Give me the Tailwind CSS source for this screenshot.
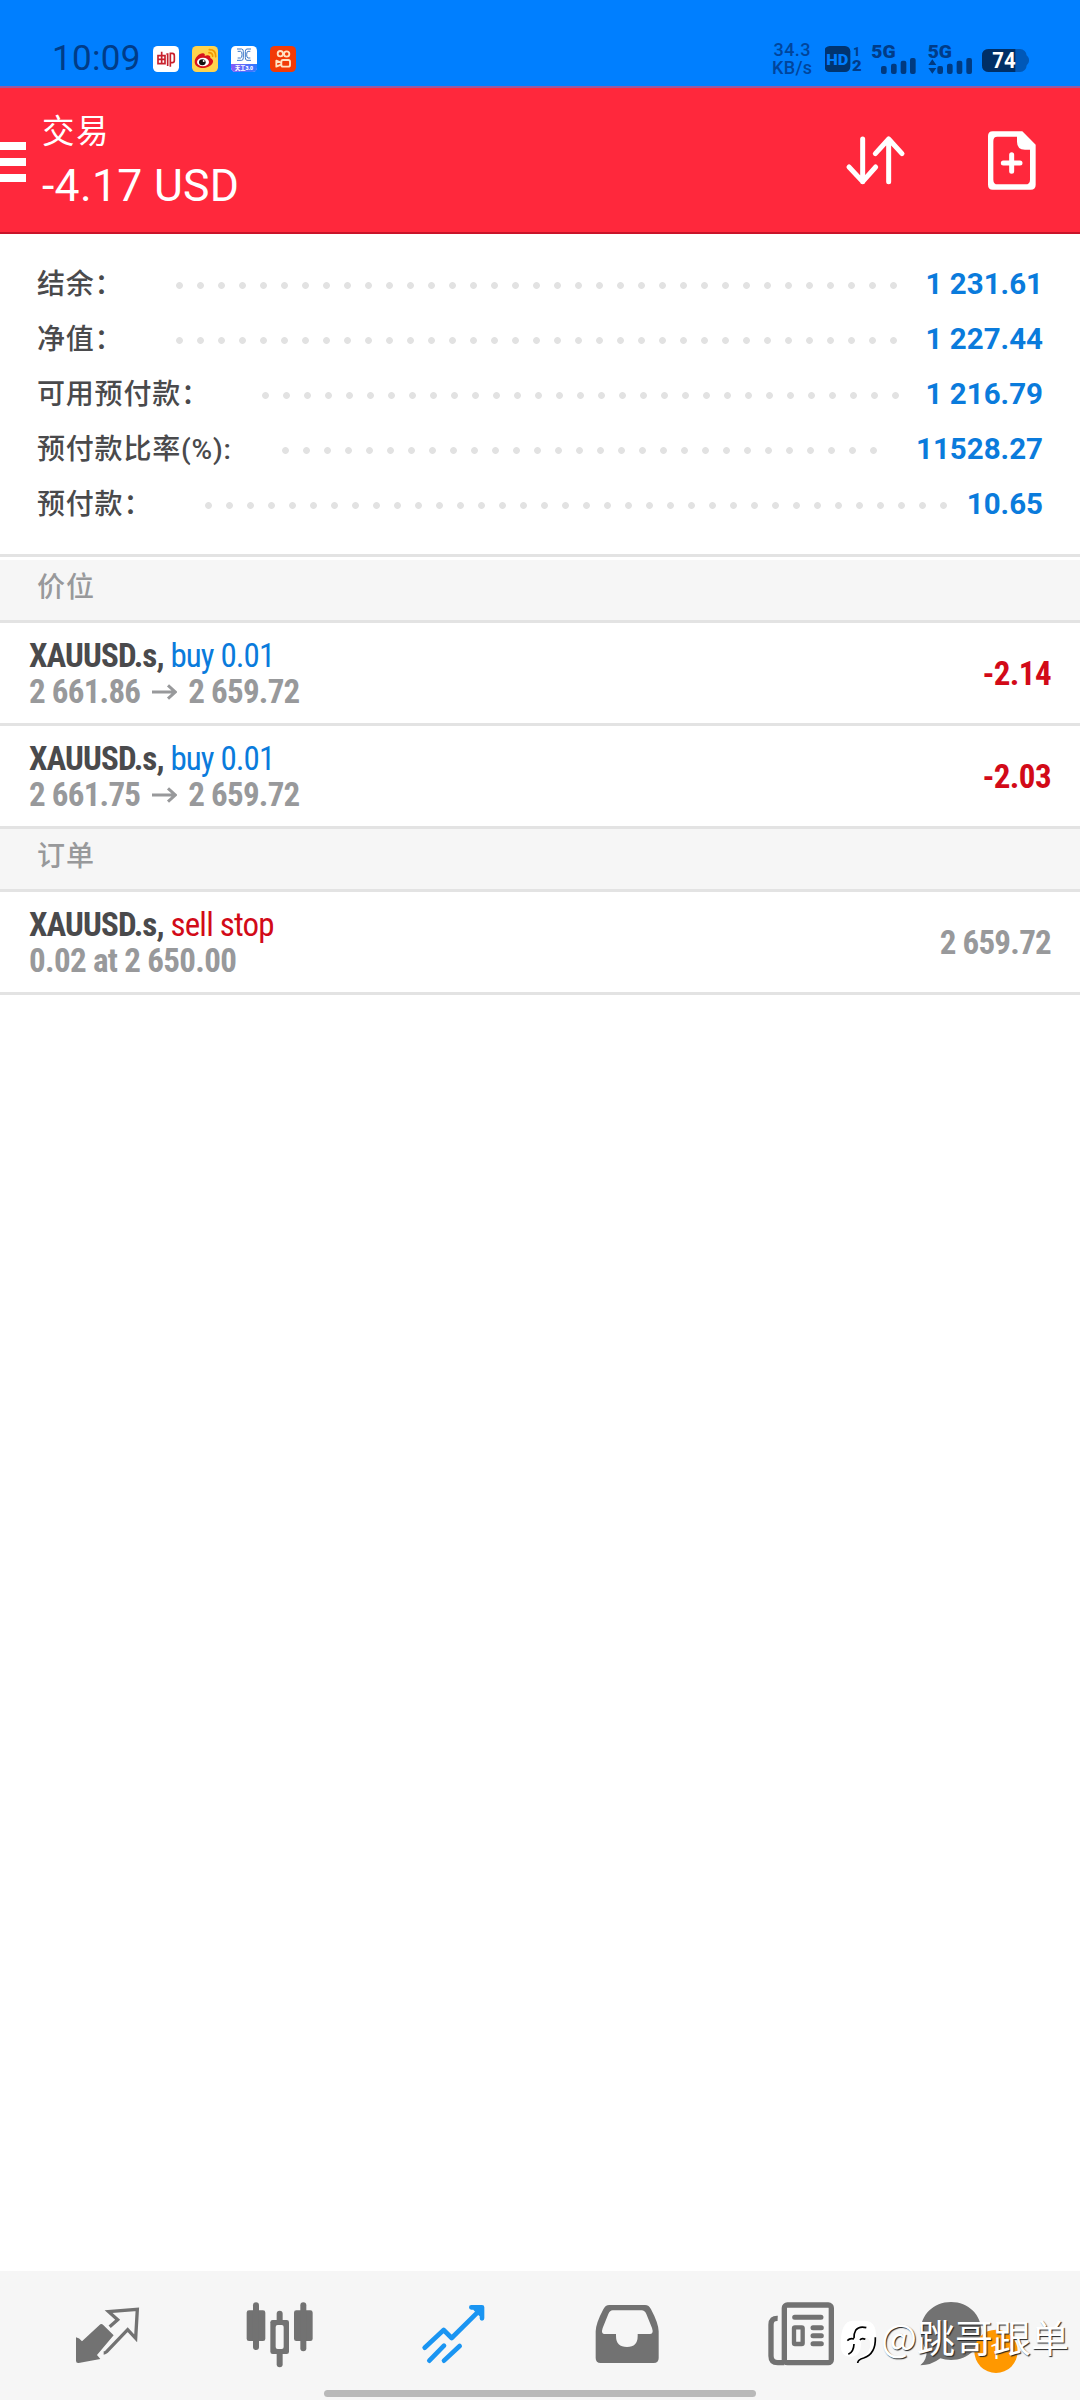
<!DOCTYPE html>
<html lang="zh-CN">
<head>
<meta charset="utf-8">
<title>交易</title>
<script src="https://cdn.jsdelivr.net/npm/@tailwindcss/browser@4"></script>
</head>
<body class="bg-white">
<div class="flex flex-col w-[1080px] h-[2400px] overflow-hidden bg-white font-[Roboto,'Noto_Sans_CJK_SC',sans-serif]">

  <!-- status bar -->
  <div class="flex h-[86px] shrink-0 bg-[#007fff] text-[#003c88]">
    <div class="w-[100px] pl-[52px] pt-[39px] text-[35px] leading-[40px] font-normal tracking-[0.3px] whitespace-nowrap">10:09</div>
    <div class="flex gap-[13px] pl-[53px] pt-[46px]">
      <svg class="w-[26px] h-[26px]" viewBox="0 0 78 78"><rect width="78" height="78" rx="14" fill="#fff"/><g fill="none" stroke="#c8202c" stroke-width="5"><path d="M15 29h21v24H15zM26 17v36M15 40h21M44 60V22M44 24h-4M52 62V22h6q6 0 6 7v14q0 7-6 7h-6"/></g></svg>
      <svg class="w-[26px] h-[26px]" viewBox="0 0 78 78"><rect width="78" height="78" rx="14" fill="#ffd34d"/><path d="M8 48C8 34 24 20 34 22c5 1 5 5 4 8 8-4 19-3 17 6 8 3 10 9 7 15-7 13-26 17-38 14C16 63 8 57 8 48z" fill="#d8131d"/><ellipse cx="33" cy="48" rx="18" ry="13" fill="#fff"/><ellipse cx="31" cy="49" rx="10" ry="9" fill="#111"/><circle cx="35" cy="45" r="3" fill="#fff"/><path d="M52 11q20 0 19 21M51 20q11 0 11 11" fill="none" stroke="#f39800" stroke-width="5" stroke-linecap="round"/></svg>
      <svg class="w-[26px] h-[26px]" viewBox="0 0 78 78"><defs><linearGradient id="tg"><stop stop-color="#8a5cf6"/><stop offset="1" stop-color="#2e7bff"/></linearGradient></defs><rect width="78" height="78" rx="14" fill="#fff"/><path d="M0 54h78v10q0 14-14 14H14Q0 78 0 64z" fill="url(#tg)"/><path d="M18 9h14q5 0 5 8v18q0 8-5 8H18M60 9H48q-5 0-5 8v18q0 8 5 8h12M20 16h9q4 0 4 10t-4 10h-9M58 16h-7q-4 0-4 10t4 10h7" fill="none" stroke="#3d78c8" stroke-width="3"/><text x="12" y="72" font-size="16" font-weight="900" fill="#fff" textLength="54" lengthAdjust="spacingAndGlyphs">天工3.0</text></svg>
      <svg class="w-[26px] h-[26px]" viewBox="0 0 78 78"><rect width="78" height="78" rx="14" fill="#f23a06"/><g fill="none" stroke="#ffe3c4" stroke-width="5.5" stroke-linejoin="round"><circle cx="31" cy="23" r="8"/><circle cx="50" cy="24" r="8"/><rect x="34" y="42" width="26" height="20" rx="5"/><path d="M33 50l-14-6v18l14-6"/></g></svg>
    </div>
    <div class="flex ml-auto pr-[51px] pt-[40px]">
      <div class="w-[51px] pt-[1px] text-center text-[18px] leading-[18px] tracking-[0.4px] font-medium text-[#00459c] -translate-x-[7px]">34.3<br>KB/s</div>
      <svg class="w-[48px] h-[40px]" viewBox="254 60 144 120" fill="currentColor"><rect x="252" y="78" width="78" height="78" rx="16" fill="#003470"/><text x="258" y="134" font-size="46" font-weight="900" fill="#007fff" textLength="66" lengthAdjust="spacingAndGlyphs">HD</text><text x="339" y="107" font-size="40" font-weight="900" textLength="20" lengthAdjust="spacingAndGlyphs">1</text><text x="335" y="153" font-size="43" font-weight="900" textLength="29" lengthAdjust="spacingAndGlyphs">2</text></svg>
      <svg class="w-[56px] h-[40px] overflow-visible" viewBox="399 60 168 120" fill="currentColor"><text x="394" y="115" font-size="57" font-weight="900" textLength="73" lengthAdjust="spacingAndGlyphs">5G</text><g fill="#003a80"><rect x="423" y="138" width="17" height="24" rx="6"/><rect x="453" y="131" width="17" height="31" rx="6"/><rect x="482" y="122" width="17" height="40" rx="6"/><rect x="510" y="114" width="17" height="48" rx="6"/></g></svg>
      <svg class="w-[53.3px] h-[40px] overflow-visible" viewBox="566 60 160 120" fill="currentColor"><text x="562" y="115" font-size="57" font-weight="900" textLength="73" lengthAdjust="spacingAndGlyphs">5G</text><g fill="#003a80"><path d="M564 135l12-17 12 17zM564 144h24l-12 17z"/><rect x="591" y="138" width="17" height="24" rx="6"/><rect x="620" y="131" width="17" height="31" rx="6"/><rect x="649" y="122" width="17" height="40" rx="6"/><rect x="678" y="114" width="17" height="48" rx="6"/></g></svg>
      <svg class="w-[47px] h-[40px]" viewBox="724 60 141 120"><rect x="724" y="87" width="134" height="69" rx="20" fill="#0058b8"/><path d="M856 106q9 4 9 15t-9 15z" fill="#0058b8"/><path d="M744 87h80v69h-80q-20 0-20-20v-29q0-20 20-20z" fill="#002f66"/><text x="755" y="145" font-size="64" font-weight="700" fill="#fff" textLength="70" lengthAdjust="spacingAndGlyphs">74</text></svg>
    </div>
  </div>

  <!-- title bar -->
  <div class="flex h-[148px] shrink-0 bg-[#ff283c] border-t-2 border-t-[#9a58a0] border-b-2 border-b-[#c8142a] text-white">
    <div class="flex flex-col gap-[8px] w-[27px] pt-[54px]">
      <div class="h-[8px] w-[26px] bg-white"></div>
      <div class="h-[8px] w-[26px] bg-white"></div>
      <div class="h-[8px] w-[26px] bg-white"></div>
    </div>
    <div class="pl-[15px] pt-[20px] whitespace-nowrap">
      <div class="text-[32.5px] leading-[48px] tracking-[1.5px] font-normal">交易</div>
      <div class="text-[44.5px] leading-[60px] tracking-[0.3px] font-normal">-4.17 USD</div>
    </div>
    <div class="flex gap-[75px] ml-auto pr-[40px] pt-[42px]">
      <svg class="w-[70px] h-[60px]" viewBox="300 330 210 180" fill="none" stroke="#fff" stroke-width="15" stroke-linecap="round" stroke-linejoin="round"><path d="M368 357v128M327 441l41 44 39-44M446 485V357M406 401l40-44 40 44"/></svg>
      <svg class="w-[55px] h-[60px]" viewBox="735 330 165 180"><path d="M758 334h89l40 40v120q0 15-15 15H758q-14 0-14-15V348q0-14 14-14z" fill="#fff"/><path d="M772 350h59v15q0 24 24 24h15v90q0 14-14 14h-83q-13 0-13-14V363q0-13 12-13z" fill="#ff283c"/><path d="M815 404v50M790 429h50" stroke="#fff" stroke-width="15" stroke-linecap="round"/></svg>
    </div>
  </div>

  <!-- account summary -->
  <div class="h-[320px] shrink-0 pt-[23px] pl-[37px] pr-[37px] text-[28px] leading-[54px] whitespace-nowrap text-[#4a4a4c]">
    <div class="flex h-[55px]"><div class="w-[131.5px] leading-[56px] tracking-[0.8px] font-medium">结余：</div><div class="w-[735px] h-[57px] bg-[radial-gradient(circle,#e2e2e2_3px,transparent_3.8px)] bg-[length:21px_57px]"></div><div class="ml-auto text-[29.5px] font-bold text-[#0a7bdc]">1 231.61</div></div>
    <div class="flex h-[55px]"><div class="w-[131.5px] leading-[56px] tracking-[0.8px] font-medium">净值：</div><div class="w-[735px] h-[57px] bg-[radial-gradient(circle,#e2e2e2_3px,transparent_3.8px)] bg-[length:21px_57px]"></div><div class="ml-auto text-[29.5px] font-bold text-[#0a7bdc]">1 227.44</div></div>
    <div class="flex h-[55px]"><div class="w-[218px] leading-[56px] tracking-[0.8px] font-medium">可用预付款：</div><div class="w-[651px] h-[57px] bg-[radial-gradient(circle,#e2e2e2_3px,transparent_3.8px)] bg-[length:21px_57px]"></div><div class="ml-auto text-[29.5px] font-bold text-[#0a7bdc]">1 216.79</div></div>
    <div class="flex h-[55px]"><div class="w-[238px] leading-[56px] tracking-[0.8px] font-medium">预付款比率(%):</div><div class="w-[609px] h-[57px] bg-[radial-gradient(circle,#e2e2e2_3px,transparent_3.8px)] bg-[length:21px_57px]"></div><div class="ml-auto text-[29.5px] font-bold text-[#0a7bdc]">11528.27</div></div>
    <div class="flex h-[55px]"><div class="w-[160.5px] leading-[56px] tracking-[0.8px] font-medium">预付款：</div><div class="w-[756px] h-[57px] bg-[radial-gradient(circle,#e2e2e2_3px,transparent_3.8px)] bg-[length:21px_57px]"></div><div class="ml-auto text-[29.5px] font-bold text-[#0a7bdc]">10.65</div></div>
  </div>
  <div class="h-[6px] shrink-0 border-t-3 border-[#e3e3e3]"></div>

  <div class="h-[63px] shrink-0 bg-[#f6f6f6] border-b-3 border-[#e3e3e3] pl-[37px] text-[28px] leading-[55px] tracking-[1px] font-medium text-[#98999b]">价位</div>

  <!-- positions -->
  <div class="flex justify-between h-[103px] shrink-0 border-b-3 border-[#e3e3e3] pl-[29px] pr-[29px] pt-[15px] text-[33px] tracking-[-0.75px] whitespace-nowrap font-['Roboto_Condensed',Roboto,sans-serif]">
    <div class="leading-[36px]"><div><span class="font-bold tracking-[-0.9px] text-[#4a4a4c]">XAUUSD.s,</span> <span class="tracking-[-0.9px] text-[#0a7bdc]">buy 0.01</span></div><div class="flex font-bold text-[#98999b]">2 661.86<svg class="w-[25px] h-[36px] ml-[12px] mr-[11px]" viewBox="0 0 75 108" fill="none" stroke="currentColor" stroke-width="9"><path d="M0 54h70M48 34l22 20-22 20"/></svg>2 659.72</div></div>
    <div class="leading-[71px] font-bold tracking-[-0.6px] text-[#d20a18]">-2.14</div>
  </div>
  <div class="flex justify-between h-[103px] shrink-0 border-b-3 border-[#e3e3e3] pl-[29px] pr-[29px] pt-[15px] text-[33px] tracking-[-0.75px] whitespace-nowrap font-['Roboto_Condensed',Roboto,sans-serif]">
    <div class="leading-[36px]"><div><span class="font-bold tracking-[-0.9px] text-[#4a4a4c]">XAUUSD.s,</span> <span class="tracking-[-0.9px] text-[#0a7bdc]">buy 0.01</span></div><div class="flex font-bold text-[#98999b]">2 661.75<svg class="w-[25px] h-[36px] ml-[12px] mr-[11px]" viewBox="0 0 75 108" fill="none" stroke="currentColor" stroke-width="9"><path d="M0 54h70M48 34l22 20-22 20"/></svg>2 659.72</div></div>
    <div class="leading-[71px] font-bold tracking-[-0.6px] text-[#d20a18]">-2.03</div>
  </div>

  <div class="h-[63px] shrink-0 bg-[#f6f6f6] border-b-3 border-[#e3e3e3] pl-[37px] text-[28px] leading-[55px] tracking-[1px] font-medium text-[#98999b]">订单</div>

  <!-- orders -->
  <div class="flex justify-between h-[103px] shrink-0 border-b-3 border-[#e3e3e3] pl-[29px] pr-[29px] pt-[15px] text-[33px] tracking-[-0.75px] whitespace-nowrap font-['Roboto_Condensed',Roboto,sans-serif]">
    <div class="leading-[36px]"><div><span class="font-bold tracking-[-0.9px] text-[#4a4a4c]">XAUUSD.s,</span> <span class="tracking-[-0.8px] text-[#d20a18]">sell stop</span></div><div class="font-bold tracking-[-0.65px] text-[#98999b]">0.02 at 2 650.00</div></div>
    <div class="leading-[71px] font-bold text-[#98999b]">2 659.72</div>
  </div>

  <!-- bottom navigation -->
  <div class="relative mt-auto h-[129px] shrink-0 bg-[#f6f6f6]">
    <div class="grid grid-cols-6 px-5 h-[129px]">
      <svg class="w-full h-[129px]" viewBox="60 63 520 387"><path d="M301 223q4-3 8 1l32 32-50 59 10 12-65 12q-8 1-8-7v-70q10 1 18 12z" fill="#727272"/><path d="M329 230l24-21-27-24 86-7-5 87-24-26-63 66q-4 4-9 4" fill="none" stroke="#727272" stroke-width="10"/></svg>
      <svg class="w-full h-[129px]" viewBox="580 63 520 387"><g fill="#727272"><rect x="741" y="181" width="56" height="92" rx="7"/><rect x="760" y="157" width="18" height="143" rx="9"/><rect x="883" y="181" width="56" height="92" rx="7"/><rect x="902" y="157" width="18" height="147" rx="9"/><rect x="831" y="182" width="18" height="170" rx="9"/><rect x="812" y="210" width="56" height="102" rx="7"/></g><rect x="828" y="225" width="24" height="72" rx="6" fill="#f6f6f6"/></svg>
      <svg class="w-full h-[129px]" viewBox="20 63 520 387" fill="none" stroke="#1a95f2" stroke-width="14" stroke-linecap="round" stroke-linejoin="round"><path d="M193 293l57-53 24 24 86-85M207 332l44-45M251 332l47-44"/><path d="M333 172h32v33M345 176l16 16"/></svg>
      <svg class="w-full h-[129px]" viewBox="540 63 520 387"><path d="M748 165h107q12 0 18 13 22 41 23 66v80q0 15-15 15H722q-15 0-15-15v-80q1-25 23-66 6-13 18-13z" fill="#727272"/><path d="M758 181h87q9 0 14 11l17 42q6 18-7 18h-36v6q0 33-32 33-33 0-33-33v-6h-34q-12 0-6-18l17-42q5-11 13-11z" fill="#f6f6f6"/></svg>
      <svg class="w-full h-[129px]" viewBox="-20 63 520 387"><g fill="none" stroke="#727272" stroke-width="16"><path d="M174 205q-20-1-20 19v94q0 20 20 20h20"/><rect x="194" y="165" width="141" height="173" rx="9"/></g><g stroke="#727272" stroke-width="15" stroke-linecap="round" fill="none"><path d="M225 202h79M280 233h25M280 257h25M280 281h25"/></g><rect x="223" y="232" width="26" height="50" rx="3" fill="none" stroke="#727272" stroke-width="13"/></svg>
      <svg class="w-full h-[129px]" viewBox="500 63 520 387"><path d="M692 156c53 0 91 39 91 87s-38 87-91 87q-18 0-32-5-27 21-60 21 20-15 19-45-18-25-18-58c0-48 38-87 91-87z" fill="#727272"/><circle cx="827" cy="304" r="65" fill="#ff9800"/><text x="827" y="328" text-anchor="middle" font-size="66" fill="#fff">1</text></svg>
    </div>
    <!-- author tag -->
    <div class="absolute left-[840px] top-[47px] flex h-[46px] whitespace-nowrap text-white">
      <svg class="w-[38px] h-[46px] mr-[3px]" viewBox="362 204 114 138"><path d="M400 212h35q35 0 35 45v15q0 45-45 52l-10 14q0-16 14-20 25-12 24-37-1-17-14-17-13 1-14 18-1 38-32 38-29 0-29-36 0-72 36-72z" fill="#fff"/><path d="M441 233q-22-6-32 8-6 10-5 24M384 272q8-9 20-5M422 270q5-7 16-2M404 282q-1 24-17 31M468 262q2 50-35 62-17 4-18 15" fill="none" stroke="#000" stroke-width="5"/></svg>
      <div class="text-[38px] leading-[35px] font-normal font-['Noto_Sans_CJK_SC',sans-serif] [text-shadow:1px_1px_1px_#222]">@跳哥跟单</div>
    </div>
    <div class="absolute left-[324px] top-[119px] w-[432px] h-[7px] rounded-full bg-[#b9b9b9]"></div>
  </div>
</div>
</body>
</html>
